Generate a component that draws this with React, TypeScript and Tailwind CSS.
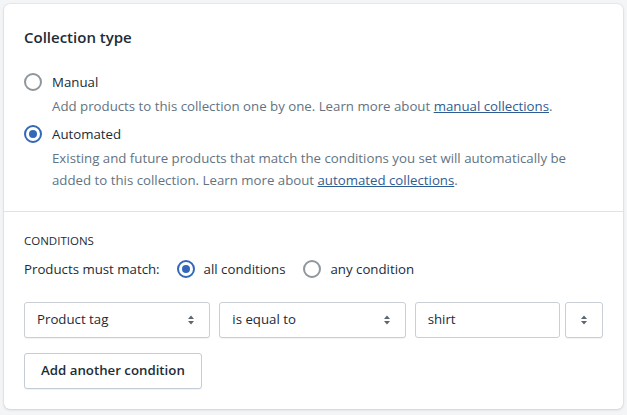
import { useState } from "react";

function Radio({ checked }: { checked: boolean }) {
  return checked ? (
    <span className="flex h-[18px] w-[18px] shrink-0 items-center justify-center rounded-full border-2 border-[#3368b8] bg-white">
      <span className="h-[8px] w-[8px] rounded-full bg-[#3368b8]" />
    </span>
  ) : (
    <span className="h-[18px] w-[18px] shrink-0 rounded-full border-2 border-[#8f969c] bg-white" />
  );
}

function Arrows() {
  return (
    <svg width="8" height="12" viewBox="0 0 8 12" className="shrink-0">
      <path d="M4 1.5 L7 5 H1 Z" fill="#5c6670" />
      <path d="M4 10.5 L7 7 H1 Z" fill="#5c6670" />
    </svg>
  );
}

function Select({ label, width }: { label: string; width: string }) {
  return (
    <div
      className={`${width} flex h-[36px] items-center justify-between rounded-[3px] border border-[#c9cfd5] bg-white pl-[12px] pr-[14px] shadow-[0_1px_0_rgba(22,29,37,0.05)]`}
    >
      <span>{label}</span>
      <Arrows />
    </div>
  );
}

export default function App() {
  const [type, setType] = useState("automated");
  const [match, setMatch] = useState("all");

  return (
    <div
      className="min-h-[415px] w-[627px] bg-[#f4f5f6] px-[4px] pt-[4px] text-[13.25px] text-[#212b36]"
      style={{ fontFamily: '"Open Sans", sans-serif' }}
    >
      <div className="w-[619px] rounded-[6px] bg-white shadow-[0_0_0_1px_rgba(63,63,68,0.05),0_1px_3px_0_rgba(63,63,68,0.15)]">
        <div className="px-[20px] pt-[23px] pb-[20px]">
          <h2 className="text-[15px] font-semibold leading-[20px]">Collection type</h2>
          <div className="mt-[25px]">
            <label className="flex cursor-pointer items-center gap-[10px] leading-[20px]" onClick={() => setType("manual")}>
              <Radio checked={type === "manual"} />
              <span>Manual</span>
            </label>
            <p className="mt-[4px] pl-[28px] leading-[20px] text-[#637381]">
              Add products to this collection one by one. Learn more about{" "}
              <a className="text-[#2f5d93] underline">manual collections</a>.
            </p>
            <label className="mt-[8px] flex cursor-pointer items-center gap-[10px] leading-[20px]" onClick={() => setType("automated")}>
              <Radio checked={type === "automated"} />
              <span>Automated</span>
            </label>
            <p className="mt-[3px] max-w-[548px] pl-[28px] leading-[22px] text-[#637381]">
              Existing and future products that match the conditions you set will automatically be added to this
              collection. Learn more about <a className="text-[#2f5d93] underline">automated collections</a>.
            </p>
          </div>
        </div>
        <div className="border-t border-[#dfe3e8] px-[20px] pt-[21px] pb-[20px]">
          <h3 className="text-[11.5px] font-normal uppercase leading-[16px]">Conditions</h3>
          <div className="mt-[10px] flex items-center leading-[20px]">
            <span>Products must match:</span>
            <label className="ml-[17px] flex cursor-pointer items-center gap-[9px]" onClick={() => setMatch("all")}>
              <Radio checked={match === "all"} />
              <span>all conditions</span>
            </label>
            <label className="ml-[18px] flex cursor-pointer items-center gap-[9px]" onClick={() => setMatch("any")}>
              <Radio checked={match === "any"} />
              <span>any condition</span>
            </label>
          </div>
          <div className="mt-[23px] flex items-center gap-[9px]">
            <Select label="Product tag" width="w-[187px]" />
            <Select label="is equal to" width="w-[187px]" />
            <div className="flex h-[36px] w-[146px] items-center rounded-[3px] border border-[#c9cfd5] bg-white px-[12px]">
              shirt
            </div>
            <div className="-ml-[4px] flex h-[36px] w-[38px] items-center justify-center rounded-[3px] border border-[#c9cfd5] bg-white shadow-[0_1px_0_rgba(22,29,37,0.05)]">
              <Arrows />
            </div>
          </div>
          <button className="mt-[15px] h-[36px] rounded-[3px] border border-[#c4cdd5] bg-white px-[16px] font-semibold shadow-[0_1px_0_rgba(22,29,37,0.05)]">
            Add another condition
          </button>
        </div>
      </div>
    </div>
  );
}
